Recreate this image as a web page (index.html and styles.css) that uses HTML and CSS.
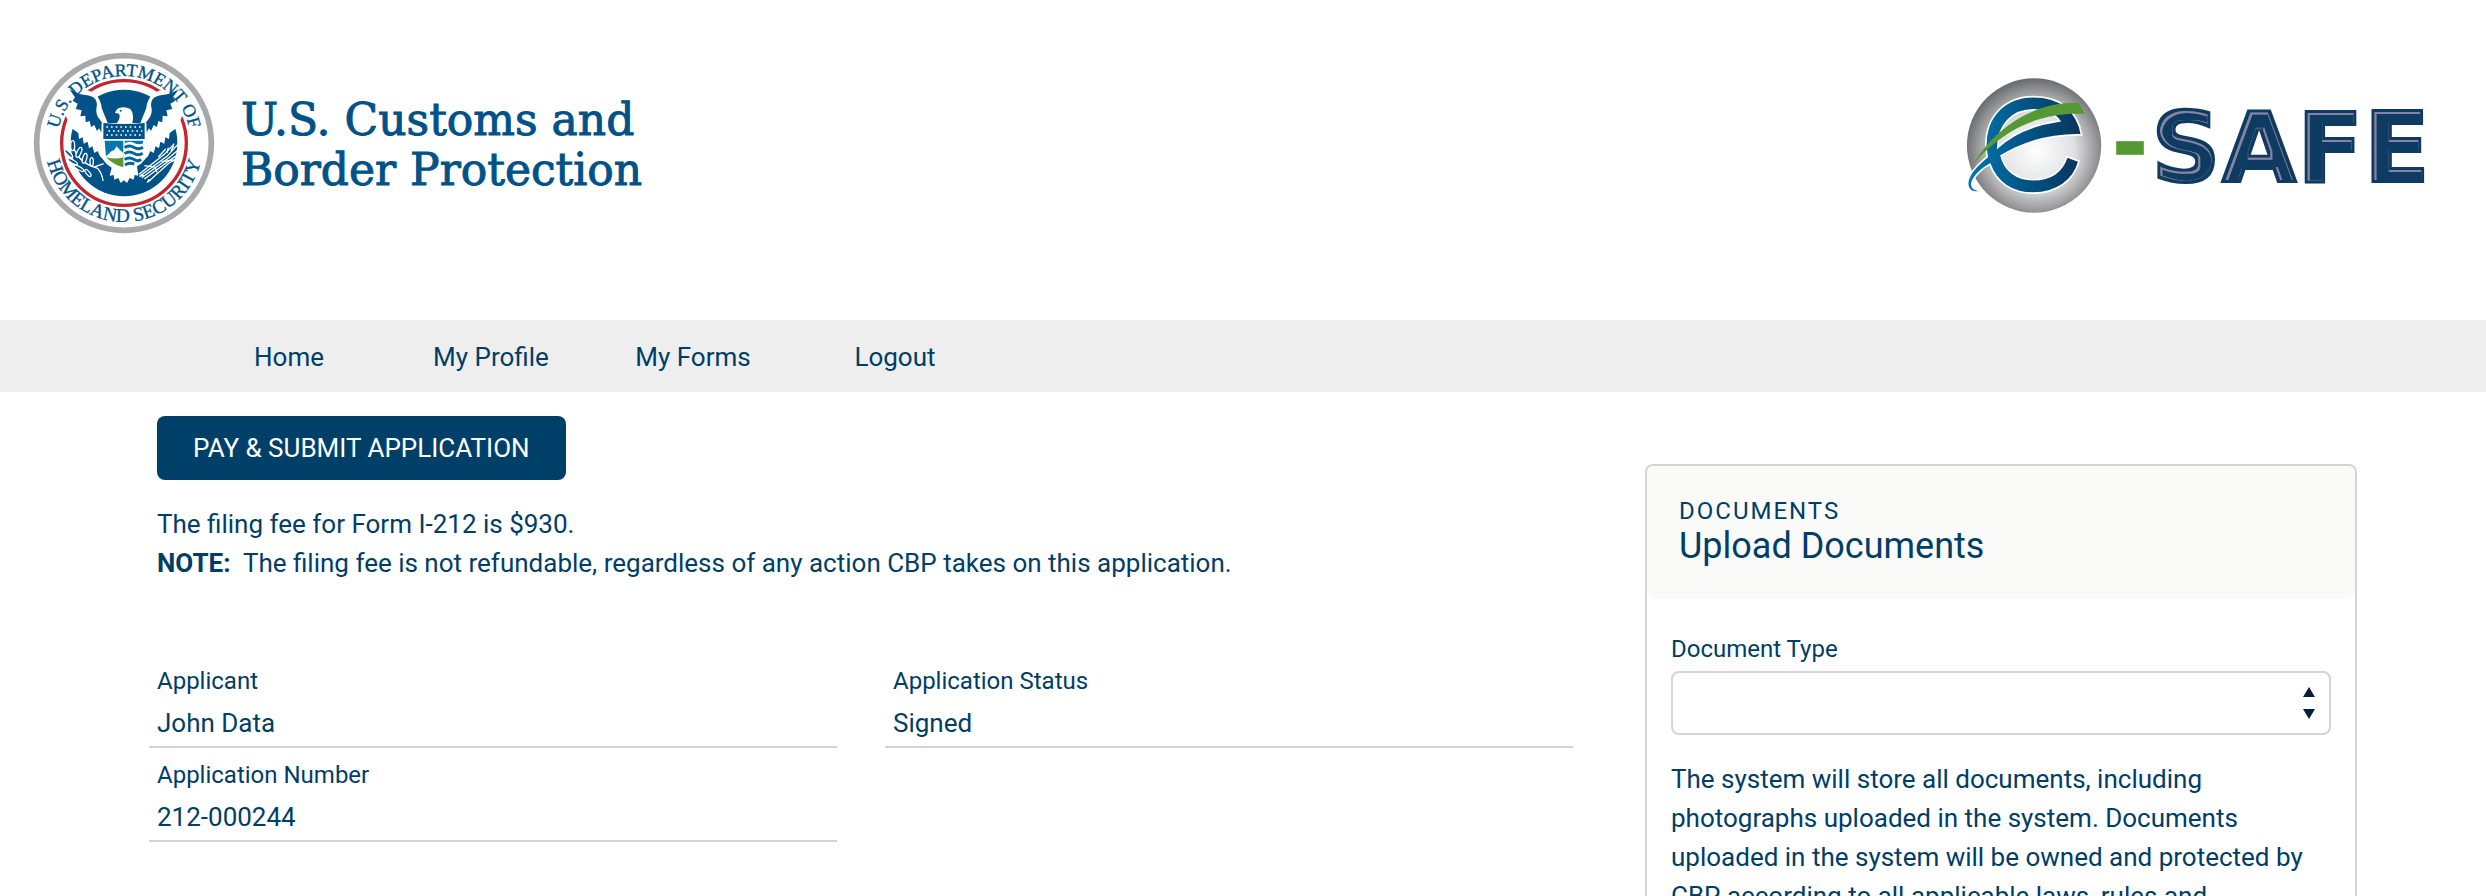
FILE: index.html
```html
<!DOCTYPE html>
<html lang="en">
<head>
    <meta charset="utf-8">
    <title>e-SAFE | U.S. Customs and Border Protection</title>
    <link rel="stylesheet" href="styles.css">
</head>
<body>
    <header class="site-header">
        <div class="brand">
            <svg class="seal" viewBox="38 37 546 546" aria-hidden="true">
                <defs>
                    <path id="arc-top" d="M110,310 A201,201 0 0 1 512,310"/>
                    <path id="arc-bottom" d="M74,310 A237,237 0 0 0 548,310"/>
                    <g id="wing">
                        <path fill="#fff" d="M120,150 L196,150 Q240,160 244,205 L262,250 L262,350 L246,345 L240,352 L232,334 L222,340 L216,320 L206,326 L202,306 L190,312 L187,293 L176,298 L174,280 L152,264 L130,215 Z"/>
                        <path fill="#005288" d="M147,149 C168,163 190,166 208,168 C230,174 232,190 228,208 C226,230 240,240 246,250 L246,284 L236,266 L230,274 L222,256 L212,262 L208,244 L196,248 L195,228 L180,230 L184,212 L166,208 L172,192 L157,183 L164,173 Z"/>
                    </g>
                </defs>
                <circle cx="311" cy="310" r="262" fill="#fff" stroke="#a7a9ac" stroke-width="17"/>
                <circle cx="311" cy="310" r="187" fill="none" stroke="#c4262e" stroke-width="10"/>
                <circle cx="311" cy="310" r="160" fill="#005288"/>
                <use href="#wing"/>
                <use href="#wing" transform="matrix(-1 0 0 1 622 0)"/>
                <!-- body, head and tail -->
                <path fill="#fff" d="M244,250 L290,250 Q302,232 296,222 L284,220 Q284,212 294,206 Q312,198 330,208 Q342,222 336,250 L378,250 L382,350 L362,372 L350,380 L354,408 L343,406 L340,420 L328,415 L320,430 L311,422 L301,430 L294,415 L282,420 L280,406 L268,408 L274,384 L258,372 L240,350 Z"/>
                <circle cx="301" cy="213" r="3" fill="#005288"/>
                <!-- shield -->
                <path fill="#005288" d="M249,250 Q311,256 373,250 V298 H249 Z"/>
                <g fill="none" stroke="#fff" stroke-width="5" stroke-dasharray="5 9">
                    <path d="M258,262 H368"/>
                    <path d="M264,274 H366"/>
                    <path d="M258,286 H368"/>
                </g>
                <path fill="#0078ae" d="M253,303 H309 V352 H257 Z"/>
                <path fill="#fff" d="M255,352 L274,334 L281,332 L289,320 L298,330 L309,340 V356 H255 Z"/>
                <path fill="#5e9732" d="M257,353 Q284,360 309,353 V383 Q280,376 257,353 Z"/>
                <path fill="#0078ae" d="M313,303 H368 V311 Q355,318 340,309 Q326,303 313,311 Z"/>
                <g fill="none" stroke="#0065a0" stroke-width="9">
                    <path d="M313,324 Q326,314 340,323 T368,323"/>
                    <path d="M313,342 Q326,332 340,341 T367,341"/>
                    <path d="M313,360 Q326,350 340,359 T362,359"/>
                    <path d="M314,376 Q326,368 342,373"/>
                </g>
                <!-- olive branch -->
                <g fill="none" stroke="#fff" stroke-width="4">
                    <path d="M156,310 Q168,368 232,386 Q246,402 248,424"/>
                    <path d="M222,382 L250,372"/>
                </g>
                <g fill="#005288" stroke="#fff" stroke-width="4">
                    <ellipse cx="157" cy="318" rx="6" ry="15"/>
                    <ellipse cx="145" cy="342" rx="5" ry="16" transform="rotate(-45 145 342)"/>
                    <ellipse cx="176" cy="338" rx="6" ry="16" transform="rotate(25 176 338)"/>
                    <ellipse cx="157" cy="366" rx="5" ry="16" transform="rotate(-60 157 366)"/>
                    <ellipse cx="193" cy="356" rx="6" ry="15" transform="rotate(15 193 356)"/>
                    <ellipse cx="176" cy="386" rx="5" ry="16" transform="rotate(-60 176 386)"/>
                    <ellipse cx="203" cy="400" rx="5" ry="13" transform="rotate(-40 203 400)"/>
                    <ellipse cx="214" cy="366" rx="5" ry="12"/>
                </g>
                <!-- arrows -->
                <g fill="none" stroke="#fff" stroke-width="4">
                    <path d="M358,410 L440,350 L478,308"/>
                    <path d="M364,414 L446,354 L484,322"/>
                    <path d="M372,418 L448,362 L486,336"/>
                    <path d="M382,428 L446,370 L482,350"/>
                    <path d="M356,404 L432,344 L462,312"/>
                    <path d="M372,378 L404,382 L410,398"/>
                    <path d="M414,352 L436,328 M424,366 L470,360 M440,340 L444,324 M452,334 L460,318"/>
                </g>
                <path fill="#fff" d="M355,412 L366,402 L372,408 Z M378,430 L384,418 L392,422 Z"/>
                <g class="seal-text">
                    <text><textPath href="#arc-top" startOffset="50%">U.S. DEPARTMENT OF</textPath></text>
                    <text class="seal-lower"><textPath href="#arc-bottom" startOffset="50%">HOMELAND SECURITY</textPath></text>
                </g>
            </svg>
            <div class="agency">U.S. Customs and<br>Border Protection</div>
        </div>

        <svg class="esafe" viewBox="78 50 1410 412" role="img" aria-label="e-SAFE">
            <defs>
                <radialGradient id="ball" cx="52%" cy="54%" r="56%">
                    <stop offset="0" stop-color="#ffffff"/>
                    <stop offset="0.5" stop-color="#e0e1e3"/>
                    <stop offset="0.75" stop-color="#a3a3a6"/>
                    <stop offset="0.95" stop-color="#6d6e71"/>
                </radialGradient>
                <linearGradient id="blue" x1="0" x2="1" y1="0" y2="0">
                    <stop offset="0" stop-color="#0078b0"/>
                    <stop offset="0.45" stop-color="#00588a"/>
                    <stop offset="1" stop-color="#0b345c"/>
                </linearGradient>
                <!-- light line just inside the edge of each letter -->
                <filter id="bevel" x="-5%" y="-5%" width="110%" height="110%">
                    <feMorphology in="SourceAlpha" operator="erode" radius="9" result="outer"/>
                    <feMorphology in="SourceAlpha" operator="erode" radius="12" result="inner"/>
                    <feOffset in="inner" dx="3" dy="3" result="shifted"/>
                    <feComposite in="outer" in2="shifted" operator="out" result="line"/>
                    <feFlood flood-color="#8583a6"/>
                    <feComposite in2="line" operator="in" result="shine"/>
                    <feMerge>
                        <feMergeNode in="SourceGraphic"/>
                        <feMergeNode in="shine"/>
                    </feMerge>
                </filter>
            </defs>
            <circle cx="281" cy="256" r="202" fill="url(#ball)"/>
            <path fill="url(#blue)" stroke="#fff" stroke-width="5" fill-rule="evenodd" d="M424,224 C412,152 360,109 279,109 C192,109 136,170 136,253 C136,268 138,280 140,290 C100,322 82,345 81,370 C82,395 100,400 124,393 C106,390 93,386 94,370 C98,350 125,325 148,312 C168,368 215,399 279,399 C348,399 400,362 416,303 L380,290 C365,335 330,359 279,359 C225,359 192,328 182,287 C250,245 330,222 424,224 Z M172,262 C225,212 290,192 358,182 C342,160 315,149 279,149 C215,149 172,195 172,262 Z"/>
            <path fill="#569834" d="M98,312 C170,190 295,123 416,128 L434,161 C300,155 190,205 98,312 Z"/>
            <rect x="528" y="243" width="83" height="41" fill="#569834"/>
            <g filter="url(#bevel)">
                <text class="esafe-text" x="632" y="366">SAFE</text>
            </g>
        </svg>
    </header>

    <nav class="main-nav">
        <a href="#">Home</a>
        <a href="#">My Profile</a>
        <a href="#">My Forms</a>
        <a href="#">Logout</a>
    </nav>

    <main class="content">
        <section class="application">
            <div class="intro">
                <button type="button" class="btn-submit">PAY &amp; SUBMIT APPLICATION</button>
                <p>The filing fee for Form I-212 is $930.<br>
                <strong>NOTE:</strong>&nbsp; The filing fee is not refundable, regardless of any action CBP takes on this application.</p>
            </div>
            <dl class="fields">
                <div class="field">
                    <dt>Applicant</dt>
                    <dd>John Data</dd>
                </div>
                <div class="field">
                    <dt>Application Status</dt>
                    <dd>Signed</dd>
                </div>
                <div class="field">
                    <dt>Application Number</dt>
                    <dd>212-000244</dd>
                </div>
            </dl>
        </section>

        <aside class="card">
            <div class="card-header">
                <div class="card-kicker">DOCUMENTS</div>
                <h2>Upload Documents</h2>
            </div>
            <div class="card-body">
                <label for="document-type">Document Type</label>
                <div class="select-wrap">
                    <select id="document-type" name="document-type">
                        <option value=""></option>
                    </select>
                    <svg class="select-arrows" viewBox="0 0 12 32" aria-hidden="true">
                        <path d="M6,0 L12,10 H0 Z M0,22 H12 L6,32 Z"/>
                    </svg>
                </div>
                <p>The system will store all documents, including photographs uploaded in the system. Documents uploaded in the system will be owned and protected by CBP according to all applicable laws, rules and</p>
            </div>
        </aside>
    </main>
</body>
</html>
```
FILE: styles.css
```css
* {
    box-sizing: border-box;
}

body {
    margin: 0;
    background-color: #ffffff;
    color: #003e67;
    font-family: Roboto, "Liberation Sans", sans-serif;
    font-size: 26px;
    line-height: 39px;
}

p, h2, dl, dd {
    margin: 0;
}

.site-header {
    display: flex;
    justify-content: space-between;
    align-items: flex-start;
    min-height: 320px;
    padding: 52px 50px 0 33px;
}

.brand {
    display: flex;
    align-items: center;
    gap: 26px;
}

.seal {
    width: 182px;
    height: 182px;
}

.seal-text {
    fill: #005288;
    font-family: "Liberation Serif", serif;
    font-size: 54px;
    text-anchor: middle;
    stroke: #005288;
    stroke-width: 1px;
}

.seal-lower {
    font-size: 58px;
}

.agency {
    padding-top: 4px;
    color: #005288;
    font-family: "DejaVu Serif", "Liberation Serif", serif;
    font-size: 44px;
    line-height: 50px;
    -webkit-text-stroke: 1px #005288;
}

.esafe {
    width: 470px;
    height: 137px;
    margin-top: 25px;
}

.esafe-text {
    fill: #0d3b62;
    stroke: #0d3b62;
    stroke-width: 6px;
    font-family: "DejaVu Sans", sans-serif;
    font-weight: bold;
    font-size: 294px;
}

.main-nav {
    display: flex;
    height: 72px;
    padding-left: 188px;
    background-color: #eeeeee;
}

.main-nav a {
    width: 202px;
    color: #003e67;
    line-height: 74px;
    text-align: center;
    text-decoration: none;
}

.content {
    display: grid;
    grid-template-columns: 2fr 1fr;
    align-items: start;
    gap: 72px;
    padding: 24px 129px 24px 149px;
}

.intro {
    padding: 0 8px;
}

.btn-submit {
    height: 64px;
    margin-bottom: 25px;
    padding: 0 36px;
    border: none;
    border-radius: 8px;
    background-color: #004068;
    color: #ffffff;
    font: inherit;
    cursor: pointer;
}

.btn-submit:hover {
    background-color: #00568c;
}

.fields {
    display: grid;
    grid-template-columns: 1fr 1fr;
    gap: 9px 48px;
    margin-top: 80px;
}

.field {
    padding: 0 8px 3px;
    border-bottom: 2px solid #d4d4d4;
}

.field dt {
    margin-bottom: 5px;
    font-size: 24px;
    line-height: 36px;
}

.card {
    margin-top: 48px;
    border: 2px solid #d4d4d4;
    border-radius: 8px;
}

.card-header {
    padding: 31px 32px 32px;
    border-radius: 8px;
    background-color: #fafaf9;
}

.card-kicker {
    font-size: 24px;
    line-height: 28px;
    letter-spacing: 2px;
}

.card-header h2 {
    font-size: 36px;
    font-weight: 400;
    line-height: 42px;
}

.card-body {
    padding: 32px 24px;
}

.card-body label {
    display: block;
    margin-bottom: 4px;
    font-size: 24px;
    line-height: 36px;
}

.select-wrap {
    position: relative;
    margin-bottom: 25px;
}

.select-wrap select {
    display: block;
    width: 100%;
    height: 64px;
    padding: 0 48px 0 16px;
    appearance: none;
    border: 2px solid #d4d4d4;
    border-radius: 8px;
    background-color: #ffffff;
    color: #003e67;
    font: inherit;
}

.select-arrows {
    position: absolute;
    top: 16px;
    right: 16px;
    width: 12px;
    height: 32px;
    fill: #061f40;
    pointer-events: none;
}
```
